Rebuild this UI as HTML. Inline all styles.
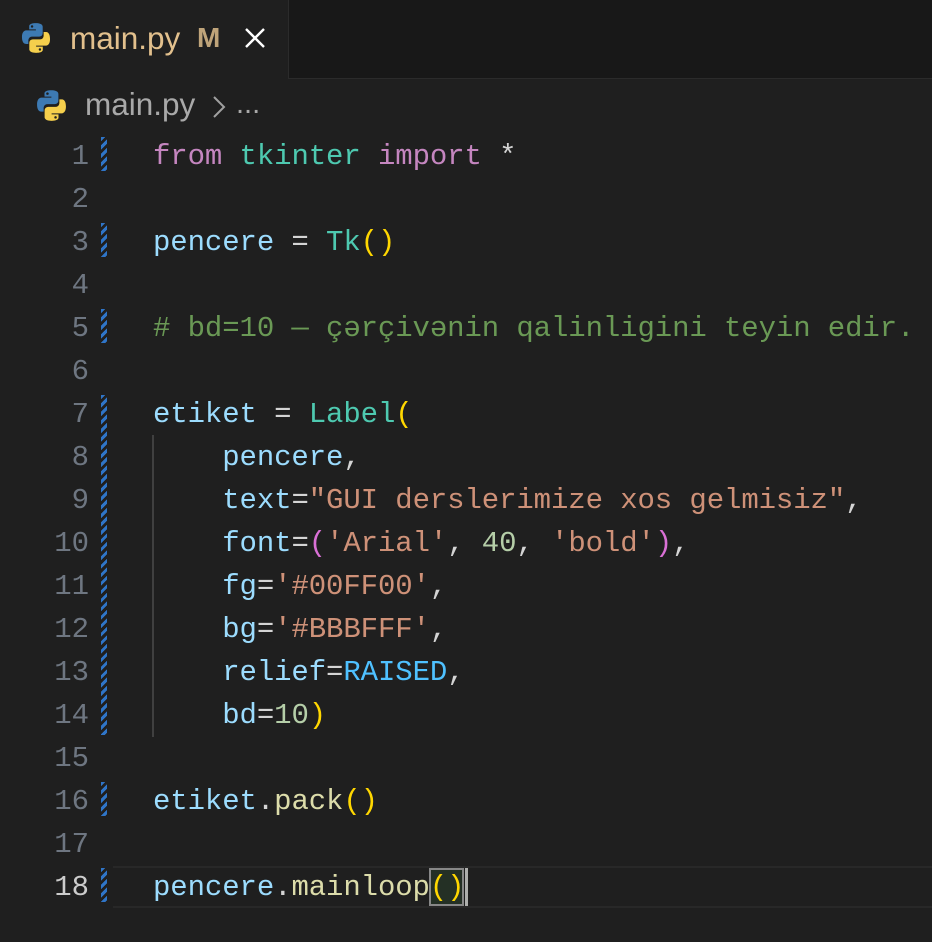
<!DOCTYPE html><html><head><meta charset="utf-8"><style>
body{margin:0;width:932px;height:942px;background:#1f1f1f;overflow:hidden;font-family:"Liberation Sans",sans-serif;position:relative}
.tabbar{position:absolute;left:0;top:0;width:932px;height:79px;background:#181818;border-bottom:1px solid #2b2b2b;box-sizing:border-box}
.tab{position:absolute;left:0;top:0;width:288px;height:79px;background:#1f1f1f;border-right:1px solid #2b2b2b}
.t{position:absolute;white-space:pre}
.code{position:absolute;left:0;top:135px;font-family:"Liberation Mono",monospace;font-size:29px}
.ln{position:absolute;left:0;width:89px;text-align:right;color:#6e7681;height:43px;line-height:43px}
.c{position:absolute;left:153px;color:#d4d4d4;height:43px;line-height:43px;white-space:pre;letter-spacing:-0.1px}
.g{position:absolute;left:101px;width:6px;height:34px;background:repeating-linear-gradient(135deg,#2f75c8 0 3px,transparent 3px 6px)}
.k{color:#c586c0}.cl{color:#4ec9b0}.v{color:#9cdcfe}.cm{color:#6a9955}.s{color:#ce9178}.n{color:#b5cea8}.f{color:#dcdcaa}.b{color:#ffd700}.p{color:#da70d6}.cn{color:#4fc1ff}
</style></head><body>
<div class="tabbar"><div class="tab">
<svg style="position:absolute;left:19px;top:21px" width="34" height="34" viewBox="0 0 32 32"><path d="M15.8 2c-6.6 0-6.2 2.9-6.2 2.9v3h6.3v.9H7.1S2.8 8.3 2.8 15.1s3.7 6.5 3.7 6.5h2.3v-3.2s-.1-3.7 3.7-3.7h6.3s3.500.1 3.5-3.4V5.5S22.8 2 15.8 2zm-3.5 2a1.1 1.1 0 1 1 0 2.3 1.1 1.1 0 0 1 0-2.3z" fill="#3d7ab3"/><path d="M16.2 30c6.6 0 6.2-2.9 6.2-2.9v-3h-6.3v-.9h8.8s4.3.5 4.3-6.3-3.7-6.5-3.700-6.5h-2.3v3.2s.1 3.7-3.7 3.7h-6.3s-3.5-.1-3.5 3.4v5.8S9.2 30 16.2 30zm3.5-2a1.1 1.1 0 1 1 0-2.3 1.1 1.1 0 0 1 0 2.3z" fill="#f5cf4c"/></svg>
<div class="t" style="left:70px;top:20px;font-size:31.5px;color:#e2c08d">main.py</div>
<div class="t" style="left:197px;top:22px;font-size:28px;color:#bfa47a;font-weight:bold">M</div>
<svg style="position:absolute;left:244px;top:27px" width="22" height="22"><path d="M2 2L20 20M20 2L2 20" stroke="#fff" stroke-width="2.4"/></svg>
</div></div>
<svg style="position:absolute;left:34px;top:88px" width="35" height="35" viewBox="0 0 32 32"><path d="M15.8 2c-6.6 0-6.2 2.9-6.2 2.9v3h6.3v.9H7.1S2.8 8.3 2.8 15.1s3.7 6.5 3.7 6.5h2.3v-3.2s-.1-3.7 3.7-3.7h6.3s3.5.1 3.5-3.4V5.5S22.8 2 15.8 2zm-3.5 2a1.1 1.1 0 1 1 0 2.3 1.1 1.1 0 0 1 0-2.3z" fill="#3d7ab3"/><path d="M16.2 30c6.6 0 6.2-2.9 6.2-2.9v-3h-6.3v-.9h8.8s4.3.5 4.3-6.3-3.7-6.5-3.7-6.5h-2.3v3.2s.1 3.7-3.7 3.7h-6.3s-3.5-.1-3.5 3.4v5.8S9.2 30 16.2 30zm3.5-2a1.1 1.1 0 1 1 0-2.3 1.1 1.1 0 0 1 0 2.3z" fill="#f5cf4c"/></svg>
<div class="t" style="left:85px;top:86px;font-size:31.5px;color:#a9a9a9">main.py</div>
<svg style="position:absolute;left:212px;top:95px" width="14" height="24"><path d="M2 2L12 12L2 22" stroke="#a0a0a0" stroke-width="2" fill="none"/></svg>
<div class="t" style="left:236px;top:88px;font-size:29px;color:#a9a9a9">...</div>
<div style="position:absolute;left:113px;top:866px;width:819px;height:42px;border-top:2px solid #282828;border-bottom:2px solid #282828;box-sizing:border-box"></div>
<div style="position:absolute;left:152px;top:435px;width:2px;height:302px;background:#404040"></div>
<div style="position:absolute;left:429px;top:868px;width:35px;height:38px;background:#243025;border:2px solid #888;box-sizing:border-box"></div>
<div style="position:absolute;left:465px;top:868px;width:3px;height:38px;background:#aeafad"></div>
<div class="code">
<div class="ln" style="top:0">1</div><div class="g" style="top:2px"></div><div class="c" style="top:0"><span class="k">from</span> <span class="cl">tkinter</span> <span class="k">import</span> *</div>
<div class="ln" style="top:43px">2</div>
<div class="ln" style="top:86px">3</div><div class="g" style="top:88px"></div><div class="c" style="top:86px"><span class="v">pencere</span> = <span class="cl">Tk</span><span class="b">()</span></div>
<div class="ln" style="top:129px">4</div>
<div class="ln" style="top:172px">5</div><div class="g" style="top:174px"></div><div class="c cm" style="top:172px"># bd=10 — çərçivənin qalinligini teyin edir.</div>
<div class="ln" style="top:215px">6</div>
<div class="ln" style="top:258px">7</div><div class="g" style="top:260px;height:340px"></div><div class="c" style="top:258px"><span class="v">etiket</span> = <span class="cl">Label</span><span class="b">(</span></div>
<div class="ln" style="top:301px">8</div><div class="c" style="top:301px">    <span class="v">pencere</span>,</div>
<div class="ln" style="top:344px">9</div><div class="c" style="top:344px">    <span class="v">text</span>=<span class="s">"GUI derslerimize xos gelmisiz"</span>,</div>
<div class="ln" style="top:387px">10</div><div class="c" style="top:387px">    <span class="v">font</span>=<span class="p">(</span><span class="s">'Arial'</span>, <span class="n">40</span>, <span class="s">'bold'</span><span class="p">)</span>,</div>
<div class="ln" style="top:430px">11</div><div class="c" style="top:430px">    <span class="v">fg</span>=<span class="s">'#00FF00'</span>,</div>
<div class="ln" style="top:473px">12</div><div class="c" style="top:473px">    <span class="v">bg</span>=<span class="s">'#BBBFFF'</span>,</div>
<div class="ln" style="top:516px">13</div><div class="c" style="top:516px">    <span class="v">relief</span>=<span class="cn">RAISED</span>,</div>
<div class="ln" style="top:559px">14</div><div class="c" style="top:559px">    <span class="v">bd</span>=<span class="n">10</span><span class="b">)</span></div>
<div class="ln" style="top:602px">15</div>
<div class="ln" style="top:645px">16</div><div class="g" style="top:647px"></div><div class="c" style="top:645px"><span class="v">etiket</span>.<span class="f">pack</span><span class="b">()</span></div>
<div class="ln" style="top:688px">17</div>
<div class="ln" style="top:731px;color:#cccccc">18</div><div class="g" style="top:733px"></div><div class="c" style="top:731px"><span class="v">pencere</span>.<span class="f">mainloop</span><span class="b">()</span></div>
</div>
</body></html>
